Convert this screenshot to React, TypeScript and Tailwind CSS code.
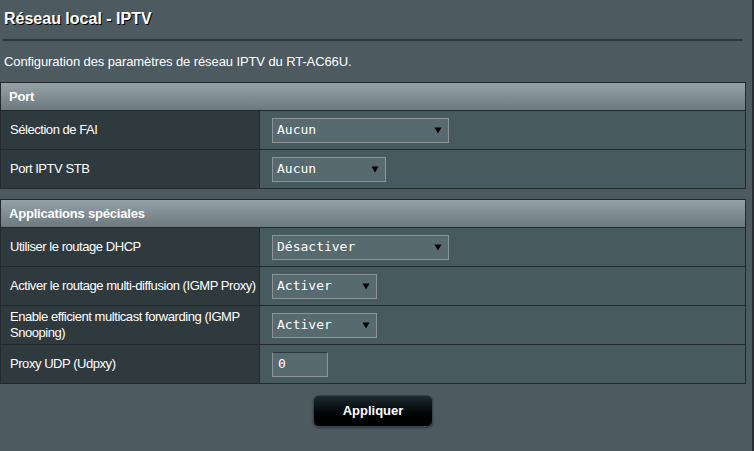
import React from "react";

type Row = { label: React.ReactNode; key: string; kind: "select" | "input"; value: string; w?: number };

const PORT_ROWS: Row[] = [
  { key: "fai", label: "Sélection de FAI", kind: "select", value: "Aucun", w: 177 },
  { key: "stb", label: "Port IPTV STB", kind: "select", value: "Aucun", w: 114 },
];

const APP_ROWS: Row[] = [
  { key: "dhcp", label: "Utiliser le routage DHCP", kind: "select", value: "Désactiver", w: 177 },
  { key: "proxy", label: "Activer le routage multi-diffusion (IGMP Proxy)", kind: "select", value: "Activer", w: 105 },
  {
    key: "snoop",
    label: (
      <>
        Enable efficient multicast forwarding (IGMP
        <br />
        Snooping)
      </>
    ),
    kind: "select",
    value: "Activer",
    w: 105,
  },
  { key: "udpxy", label: "Proxy UDP (Udpxy)", kind: "input", value: "0" },
];

function Arrow() {
  return (
    <svg width="8" height="7" viewBox="0 0 8 7" className="shrink-0">
      <path d="M0.5 0.5h7L4 6.5z" fill="#000" />
    </svg>
  );
}

function Field({ row }: { row: Row }) {
  if (row.kind === "input") {
    return (
      <div className="w-[56px] h-[25px] flex items-center pl-[5px] bg-[#576a70] border border-[#8c9498] border-t-[#2c373b] text-white font-['DejaVu_Sans_Mono',monospace] text-[13px]">
        {row.value}
      </div>
    );
  }
  return (
    <div
      className="h-[25px] flex items-center justify-between pl-[4px] pr-[6px] bg-[#576a70] border border-[#8c9498] text-white font-['DejaVu_Sans_Mono',monospace] text-[13px]"
      style={{ width: row.w }}
    >
      <span>{row.value}</span>
      <Arrow />
    </div>
  );
}

function Section({ title, rows }: { title: string; rows: Row[] }) {
  return (
    <div className="w-[746px] border border-[#222a2e]">
      <div className="h-[27px] flex items-center pl-[8px] bg-gradient-to-b from-[#95a2a7] to-[#6c7a7f] text-white font-bold text-[13px] tracking-[-0.2px]">
        {title}
      </div>
      {rows.map(r => (
        <div key={r.key} className="h-[39px] flex border-t border-[#222a2e]">
          <div className="w-[259px] shrink-0 flex items-center pl-[9px] bg-[#2f3a3f] border-r border-[#222a2e] text-white text-[13px] leading-[16px] whitespace-nowrap tracking-[-0.45px]">
            <span>{r.label}</span>
          </div>
          <div className="flex-1 flex items-center pl-[12px] bg-[#475a5f]">
            <Field row={r} />
          </div>
        </div>
      ))}
    </div>
  );
}

export default function App() {
  return (
    <div className="w-[754px] h-[451px] flex bg-[#4d5a5f] font-['Liberation_Sans',Arial,sans-serif] overflow-hidden">
      <div className="w-[752px] flex flex-col">
        <div className="pt-[9px] pl-[4px] text-[16px] leading-[19px] font-bold text-white [text-shadow:1px_1px_0_#000]">
          Réseau local - IPTV
        </div>
        <div className="mt-[11px] ml-[3px] w-[740px] h-[2px] bg-[#2e393e]" />
        <div className="mt-[13px] pl-[4px] text-[13px] leading-[16px] text-white tracking-[-0.1px]">
          Configuration des paramètres de réseau IPTV du RT-AC66U.
        </div>
        <div className="mt-[12px] flex flex-col gap-[10px]">
          <Section title="Port" rows={PORT_ROWS} />
          <Section title="Applications spéciales" rows={APP_ROWS} />
        </div>
        <div className="w-[746px] flex justify-center mt-[11px]">
          <button className="w-[120px] h-[32px] rounded-[6px] border border-[#3b464a] bg-gradient-to-b from-[#1f2c32] to-[#000] text-white font-bold text-[13px] shadow-[0_1px_2px_rgba(0,0,0,0.4)]">
            Appliquer
          </button>
        </div>
      </div>
      <div className="w-[2px] bg-[#272f33]" />
    </div>
  );
}
